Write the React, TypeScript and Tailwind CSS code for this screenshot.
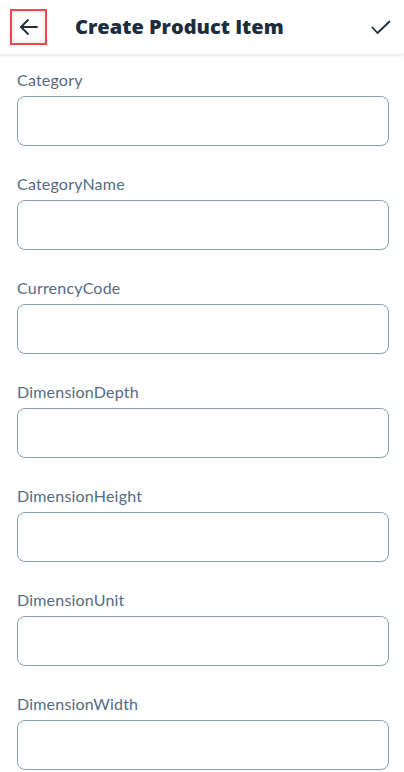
import React from "react";

const fields = [
  "Category",
  "CategoryName",
  "CurrencyCode",
  "DimensionDepth",
  "DimensionHeight",
  "DimensionUnit",
  "DimensionWidth",
];

export default function App() {
  return (
    <div className="w-[404px] h-[772px] overflow-hidden bg-white" style={{ fontFamily: "Lato, 'Open Sans', sans-serif" }}>
      <header className="relative z-10 flex h-[55px] items-center bg-white shadow-[0_1px_3px_rgba(0,0,0,0.08)] border-b border-[#eeeeee]">
        <div className="ml-[10px] flex h-[36px] w-[37px] items-center justify-center border-2 border-[#f0464f] shadow-[inset_0_0_5px_rgba(0,0,0,0.15)]">
          <svg width="20" height="18" viewBox="0 0 20 18" fill="none" stroke="#1d2d3e" strokeWidth="1.8" strokeLinecap="round" strokeLinejoin="round">
            <path d="M18 9H2" />
            <path d="M9 2L2 9l7 7" />
          </svg>
        </div>
        <h1 className="ml-[28px] text-[20px] font-extrabold leading-none text-[#1d2d3e]" style={{ fontFamily: "'Open Sans', sans-serif" }}>Create Product Item</h1>
        <div className="ml-auto mr-[5px] flex h-[36px] w-[36px] items-center justify-center">
          <svg width="20" height="15" viewBox="0 0 20 15" fill="none" stroke="#1d2d3e" strokeWidth="1.8" strokeLinecap="round" strokeLinejoin="round">
            <path d="M1.5 7.5l5 5.5L18.5 1.5" />
          </svg>
        </div>
      </header>
      <main className="flex flex-col pl-[17px] pr-[15px] pt-[13px]">
        {fields.map((f) => (
          <div key={f} className="flex flex-col pb-[26px]">
            <label className="h-[24px] text-[16px] leading-[24px] tracking-[0.2px] text-[#556b82]">{f}</label>
            <div className="mt-[4px] h-[50px] w-full rounded-[8px] border border-[#8a9db0] bg-white" />
          </div>
        ))}
      </main>
    </div>
  );
}
